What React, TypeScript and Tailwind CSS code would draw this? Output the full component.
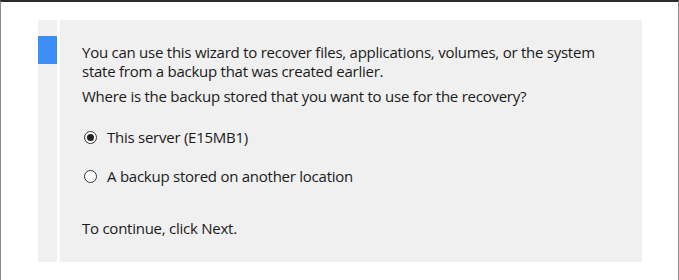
export default function App() {
  return (
    <div
      className="w-[679px] h-[280px] bg-white border-t-2 border-t-[#2b2b2b] border-l border-r border-l-[#8a8a8a] border-r-[#8a8a8a] pt-[18px] pl-[37px]"
      style={{ fontFamily: '"Open Sans", "Noto Sans", sans-serif' }}
    >
      <div className="flex w-[604px] h-[242px] bg-[#f0f0f0]">
        {/* left nav strip */}
        <div className="w-[19px] pt-[16px]">
          <div className="h-[28px] bg-[#3a8ef6]" />
        </div>
        <div className="w-[3px] bg-white" />
        <div className="flex-1 pl-[22px] pt-[23px] text-[15px] leading-[19px] text-[#1a1a1a] tracking-[-0.25px]">
          <p>
            You can use this wizard to recover files, applications, volumes, or the system
            <br />
            state from a backup that was created earlier.
          </p>
          <p className="mt-[6px]">Where is the backup stored that you want to use for the recovery?</p>
          <div className="mt-[22px] flex items-center gap-[10px] pl-[2px]">
            <span className="w-[13px] h-[13px] rounded-full border border-[#333] flex items-center justify-center bg-white">
              <span className="w-[7px] h-[7px] rounded-full bg-[#222]" />
            </span>
            <span>This server (E15MB1)</span>
          </div>
          <div className="mt-[20px] flex items-center gap-[10px] pl-[2px]">
            <span className="w-[13px] h-[13px] rounded-full border border-[#333] bg-white" />
            <span>A backup stored on another location</span>
          </div>
          <p className="mt-[33px]">To continue, click Next.</p>
        </div>
      </div>
    </div>
  );
}
